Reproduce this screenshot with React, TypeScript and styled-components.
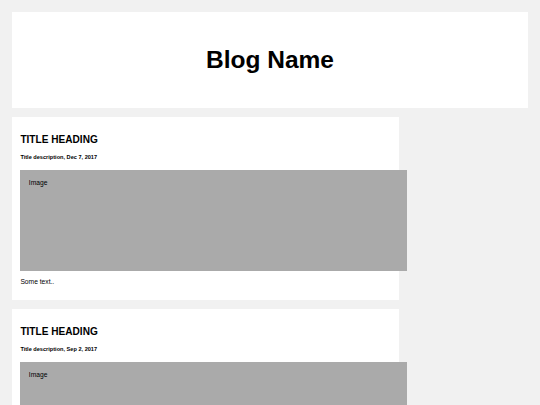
import React from "react";
import styled, { createGlobalStyle } from "styled-components";

const GlobalStyle = createGlobalStyle`
  html, body { margin: 0; }
  body {
    background: #f1f1f1;
    padding: 12px;
    font-family: "Liberation Sans", Arial, sans-serif;
    color: #000;
    overflow: hidden;
  }
`;

const Header = styled.header`
  background: #fff;
  height: 96.4px;
  display: flex;
  align-items: center;
  justify-content: center;
`;

const BlogTitle = styled.h1`
  margin: 0;
  font-size: 24.5px;
  font-weight: bold;
  line-height: 1.15;
`;

const Row = styled.div`
  display: flex;
  align-items: flex-start;
`;

const LeftColumn = styled.main`
  width: 75%;
  display: flex;
  flex-direction: column;
`;

const RightColumn = styled.aside`
  width: 25%;
`;

const Card = styled.article`
  background: #fff;
  padding: 8.4px;
  margin-top: 8.4px;
  display: flow-root;
`;

const Heading = styled.h2`
  font-size: 10.1px;
  font-weight: bold;
  line-height: 1.15;
  margin: 8.4px 0 0;
`;

const Meta = styled.h5`
  font-size: 5.6px;
  font-weight: bold;
  line-height: 1.15;
  margin: 9.3px 0;
`;

const FakeImage = styled.div<{ $h: number }>`
  background: #aaa;
  box-sizing: content-box;
  width: 100%;
  height: ${(p) => p.$h}px;
  padding: 8.4px;
  font-size: 6.7px;
  line-height: 1.15;
`;

const Text = styled.p`
  font-size: 6.7px;
  line-height: 1.15;
  margin: 6.7px 0;
`;

const posts = [
  { title: "TITLE HEADING", date: "Dec 7, 2017" },
  { title: "TITLE HEADING", date: "Sep 2, 2017" },
];

export default function App() {
  return (
    <>
      <GlobalStyle />
      <Header>
        <BlogTitle>Blog Name</BlogTitle>
      </Header>
      <Row>
        <LeftColumn>
          {posts.map((p, i) => (
            <Card key={i}>
              <Heading>{p.title}</Heading>
              <Meta>Title description, {p.date}</Meta>
              <FakeImage $h={84}>Image</FakeImage>
              <Text>Some text..</Text>
            </Card>
          ))}
        </LeftColumn>
        <RightColumn />
      </Row>
    </>
  );
}
